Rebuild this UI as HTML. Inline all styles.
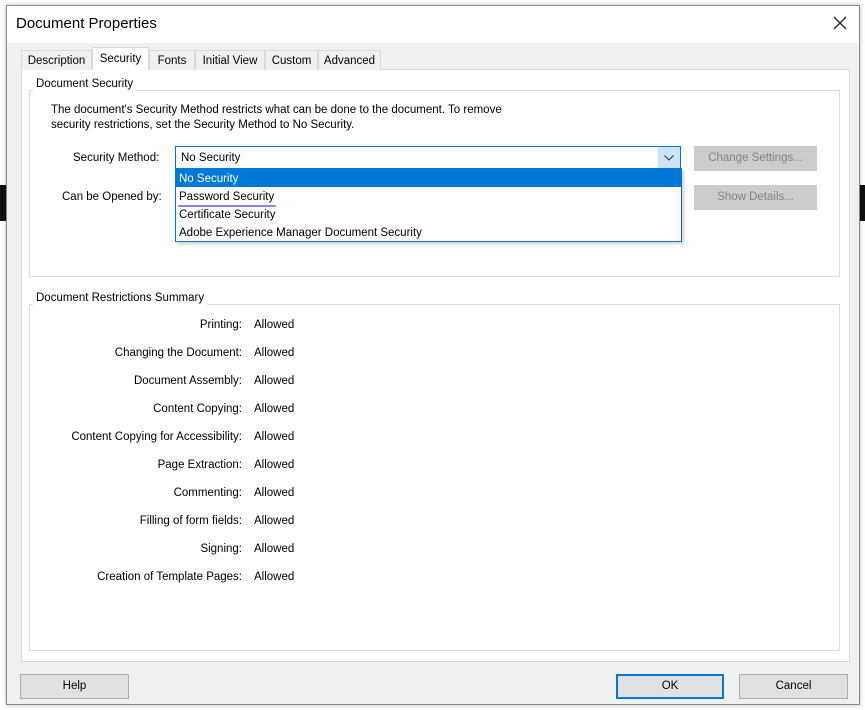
<!DOCTYPE html>
<html><head><meta charset="utf-8"><style>
*{margin:0;padding:0;box-sizing:border-box}
body{width:865px;height:710px;background:#fff;position:relative;overflow:hidden;font-family:"Liberation Sans",sans-serif;font-size:11.5px;color:#000;line-height:14px}
.a{position:absolute;white-space:nowrap}
.dlg{position:absolute;left:6px;top:5px;width:854px;height:700px;background:#f0f0f0;border:1px solid #8a8a8a;box-shadow:0 0 4px rgba(0,0,0,.3)}
.tb{position:absolute;left:0;top:0;width:852px;height:37px;background:#fff}
.tab{position:absolute;top:44px;height:20px;border:1px solid #d9d9d9;border-bottom:none;background:#f0f0f0;padding-top:3px;text-align:center}
.panel{position:absolute;left:14px;top:63px;width:829px;height:593px;background:#fff;border:1px solid #d9d9d9}
.grp{position:absolute;border:1px solid #dcdcdc}
.lg{position:absolute;background:#fff;padding:0 3px}
.btn{position:absolute;height:25px;background:#e1e1e1;border:1px solid #adadad;text-align:center;line-height:23px}
.dis{background:#cccccc;border:1px solid #cccccc;color:#838383}
.r{position:absolute;right:0;text-align:right}
.v{position:absolute;left:0}
</style></head><body>
<div class="a" style="left:0;top:185px;width:6px;height:36px;background:#111"></div>
<div class="a" style="left:859px;top:185px;width:6px;height:36px;background:#111"></div>
<div class="dlg">
<div class="tb"></div>
<div class="a" style="left:9px;top:9px;font-size:15px;line-height:18px">Document Properties</div>
<svg class="a" style="left:826px;top:10px" width="14" height="14"><path d="M1 1L13 13M13 1L1 13" stroke="#222" stroke-width="1.3"/></svg>
<div class="panel"></div>
<div class="tab" style="left:14px;width:71px">Description</div>
<div class="tab" style="left:85px;width:57px;top:41px;height:23px;background:#fff;padding-top:4px">Security</div>
<div class="tab" style="left:142px;width:46px">Fonts</div>
<div class="tab" style="left:188px;width:70px">Initial View</div>
<div class="tab" style="left:258px;width:53px">Custom</div>
<div class="tab" style="left:311px;width:63px">Advanced</div>

<div class="grp" style="left:22px;top:84px;width:811px;height:187px"></div>
<div class="lg" style="left:26px;top:71px">Document Security</div>
<div class="a" style="left:44px;top:97px;line-height:15px">The document's Security Method restricts what can be done to the document. To remove<br>security restrictions, set the Security Method to No Security.</div>
<div class="a" style="left:66px;top:145px">Security Method:</div>
<div class="a" style="left:55px;top:184px">Can be Opened by:</div>
<div class="a" style="left:168px;top:140px;width:506px;height:23px;border:1px solid #0078d7;background:#fff"><span class="a" style="left:5px;top:4px">No Security</span><div class="a" style="right:0;top:0;width:22px;height:21px;background:#cce4f7"><svg class="a" style="left:6px;top:8px" width="10" height="6"><path d="M0.5 0.5L5 5L9.5 0.5" stroke="#333" fill="none"/></svg></div></div>
<div class="a" style="left:168px;top:162px;width:507px;height:74px;border:1px solid #0078d7;background:#fff;box-shadow:2px 2px 3px rgba(0,0,0,.2)">
<div class="a" style="left:0;top:0;width:505px;height:18px;background:#0078d7"></div>
<span class="a" style="left:3px;top:3px;color:#fff">No Security</span>
<span class="a" style="left:3px;top:21px">Password Security</span>
<div class="a" style="left:2px;top:36px;width:98px;height:2px;background:#9b7fe0;border-radius:1px"></div>
<span class="a" style="left:3px;top:39px">Certificate Security</span>
<span class="a" style="left:3px;top:57px">Adobe Experience Manager Document Security</span>
</div>
<div class="btn dis" style="left:687px;top:140px;width:123px">Change Settings...</div>
<div class="btn dis" style="left:687px;top:179px;width:123px">Show Details...</div>

<div class="grp" style="left:22px;top:298px;width:811px;height:347px"></div>
<div class="lg" style="left:26px;top:285px">Document Restrictions Summary</div>
<div class="a" style="left:0;top:312px;width:235px;height:280px">
<div class="r" style="top:0">Printing:</div>
<div class="r" style="top:28px">Changing the Document:</div>
<div class="r" style="top:56px">Document Assembly:</div>
<div class="r" style="top:84px">Content Copying:</div>
<div class="r" style="top:112px">Content Copying for Accessibility:</div>
<div class="r" style="top:140px">Page Extraction:</div>
<div class="r" style="top:168px">Commenting:</div>
<div class="r" style="top:196px">Filling of form fields:</div>
<div class="r" style="top:224px">Signing:</div>
<div class="r" style="top:252px">Creation of Template Pages:</div>
</div>
<div class="a" style="left:247px;top:312px;width:60px;height:280px">
<div class="v" style="top:0">Allowed</div>
<div class="v" style="top:28px">Allowed</div>
<div class="v" style="top:56px">Allowed</div>
<div class="v" style="top:84px">Allowed</div>
<div class="v" style="top:112px">Allowed</div>
<div class="v" style="top:140px">Allowed</div>
<div class="v" style="top:168px">Allowed</div>
<div class="v" style="top:196px">Allowed</div>
<div class="v" style="top:224px">Allowed</div>
<div class="v" style="top:252px">Allowed</div>
</div>

<div class="btn" style="left:13px;top:668px;width:109px">Help</div>
<div class="btn" style="left:609px;top:668px;width:108px;border:2px solid #0078d7;line-height:21px">OK</div>
<div class="btn" style="left:732px;top:668px;width:109px">Cancel</div>
</div>
</body></html>
